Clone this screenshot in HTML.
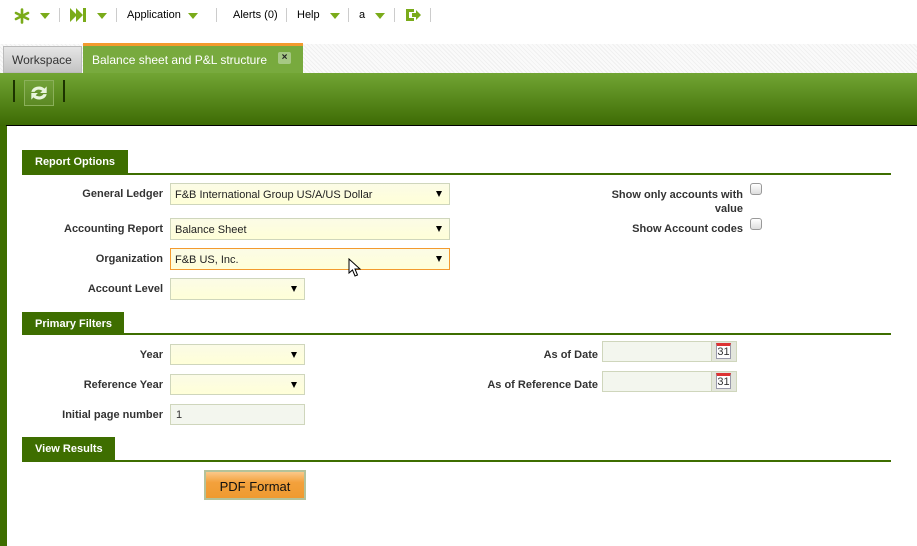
<!DOCTYPE html>
<html><head><style>
*{margin:0;padding:0;box-sizing:border-box}
body{width:917px;height:546px;overflow:hidden;background:#fff;font-family:"Liberation Sans",Arial,sans-serif;position:relative}
.a{position:absolute}
.nav{font-size:11px;color:#000;top:9px}
.tri{width:0;height:0;border-left:5px solid transparent;border-right:5px solid transparent;border-top:6px solid #7aab1a}
.sep{width:1px;height:14px;background:#ccc;top:8px}
.lbl{font-size:11px;font-weight:bold;color:#333;text-align:right}
.sel{background:linear-gradient(#fbfbe6,#ffffd8);border:1px solid #cfd6bc;font-size:11px;color:#222;padding:5px 0 0 4px}
.sel:after{content:"";position:absolute;right:7px;top:7px;border-left:3.5px solid transparent;border-right:3.5px solid transparent;border-top:6px solid #000}
.hdr{background:#3e6e00;color:#fff;font-size:11px;font-weight:bold;padding:6px 0 0 13px;height:23px}
.line{height:2px;background:#3e6e00;left:22px;width:869px}
.inp{background:#f3f6ee;border:1px solid #cfd6bc}
.cb{width:12px;height:12px;border:1px solid #999;border-radius:3px;background:linear-gradient(#fff,#ddd)}
.cal{width:25px;height:19px;background:#e3e6dc;border-left:1px solid #cfd6bc}
</style></head><body>
<svg class="a" style="left:14px;top:8px" width="16" height="16" viewBox="0 0 16 16"><g stroke="#7aab1a" stroke-width="2.6" stroke-linecap="round"><line x1="8" y1="1.5" x2="8" y2="14.5"/><line x1="2" y1="5" x2="14" y2="11"/><line x1="2" y1="11" x2="14" y2="5"/></g></svg>
<div class="a tri" style="left:40px;top:13px"></div>
<div class="a sep" style="left:59px"></div>
<svg class="a" style="left:70px;top:8px" width="17" height="14" viewBox="0 0 17 14"><path d="M0 0L7 7L0 14Z M6 0L13 7L6 14Z" fill="#7aab1a"/><rect x="13" y="0" width="3" height="14" fill="#7aab1a"/></svg>
<div class="a tri" style="left:97px;top:13px"></div>
<div class="a sep" style="left:116px"></div>
<div class="a nav" style="left:127px">Application</div>
<div class="a tri" style="left:188px;top:13px"></div>
<div class="a sep" style="left:216px"></div>
<div class="a nav" style="left:233px">Alerts (0)</div>
<div class="a sep" style="left:286px"></div>
<div class="a nav" style="left:297px">Help</div>
<div class="a tri" style="left:330px;top:13px"></div>
<div class="a sep" style="left:348px"></div>
<div class="a nav" style="left:359px">a</div>
<div class="a tri" style="left:375px;top:13px"></div>
<div class="a sep" style="left:394px"></div>
<svg class="a" style="left:405px;top:8px" width="16" height="14" viewBox="0 0 16 14"><path d="M1 1H9V4H4V10H9V13H1Z" fill="#7aab1a"/><path d="M7 5H11V2L16 7L11 12V9H7Z" fill="#7aab1a"/></svg>
<div class="a sep" style="left:430px"></div>
<div class="a" style="left:0;top:44px;width:917px;height:29px;background:repeating-linear-gradient(45deg,#f0f0f0 0 1px,#fafafa 1px 3px)"></div>
<div class="a" style="left:3px;top:46px;width:79px;height:27px;background:linear-gradient(#e6e6e6,#c4c4c4);border:1px solid #bbb;font-size:12px;color:#333;padding:6px 0 0 8px">Workspace</div>
<div class="a" style="left:83px;top:43px;width:220px;height:30px;background:#78aa3e;border-top:3px solid #f39a2e;font-size:12px;color:#fff;padding:7px 0 0 9px;white-space:nowrap">Balance sheet and P&amp;L structure</div>
<div class="a" style="left:278px;top:52px;width:13px;height:12px;background:#a6c884;border-radius:2px;font-size:10px;font-weight:bold;color:#222;text-align:center;line-height:12px">×</div>
<div class="a" style="left:0;top:73px;width:917px;height:53px;background:linear-gradient(#72a534,#3d6a03)"></div>
<div class="a" style="left:13px;top:80px;width:2px;height:22px;background:#1d3300"></div>
<div class="a" style="left:63px;top:80px;width:2px;height:22px;background:#1d3300"></div>
<div class="a" style="left:24px;top:80px;width:30px;height:26px;border:1px solid #8bb05a;background:rgba(255,255,255,.06)"></div>
<svg class="a" style="left:28px;top:82px" width="22" height="22" viewBox="0 0 20 20"><path d="M3 9A7 6 0 0 1 15 6L17 4V10H11L13 8A4.5 4 0 0 0 6 9Z" fill="#e9f5dc"/><path d="M17 11A7 6 0 0 1 5 14L3 16V10H9L7 12A4.5 4 0 0 0 14 11Z" fill="#e9f5dc"/></svg>
<div class="a" style="left:0;top:126px;width:7px;height:420px;background:#3e6e00"></div>
<div class="a" style="left:6px;top:125px;width:911px;height:1px;background:#000"></div>
<div class="a hdr" style="left:22px;top:150px;width:106px">Report Options</div>
<div class="a line" style="top:173px"></div>
<div class="a lbl" style="left:20px;top:188px;width:143px">General Ledger</div>
<div class="a sel" style="left:170px;top:183px;width:280px;height:22px">F&amp;B International Group US/A/US Dollar</div>
<div class="a lbl" style="left:20px;top:223px;width:143px">Accounting Report</div>
<div class="a sel" style="left:170px;top:218px;width:280px;height:22px">Balance Sheet</div>
<div class="a lbl" style="left:20px;top:253px;width:143px">Organization</div>
<div class="a sel" style="left:170px;top:248px;width:280px;height:22px;border-color:#f39a2e">F&amp;B US, Inc.</div>
<svg class="a" style="left:348px;top:258px" width="14" height="20" viewBox="0 0 14 20"><path d="M1 1V15L4.5 12L7 18L9.5 17L7 11H12Z" fill="#fff" stroke="#000" stroke-width="1"/></svg>
<div class="a lbl" style="left:20px;top:283px;width:143px">Account Level</div>
<div class="a sel" style="left:170px;top:278px;width:135px;height:22px"></div>
<div class="a lbl" style="left:603px;top:188px;width:140px;line-height:14px">Show only accounts with value</div>
<div class="a cb" style="left:750px;top:183px"></div>
<div class="a lbl" style="left:580px;top:223px;width:163px">Show Account codes</div>
<div class="a cb" style="left:750px;top:218px"></div>
<div class="a hdr" style="left:22px;top:312px;width:102px">Primary Filters</div>
<div class="a line" style="top:333px"></div>
<div class="a lbl" style="left:20px;top:349px;width:143px">Year</div>
<div class="a sel" style="left:170px;top:344px;width:135px;height:21px"></div>
<div class="a lbl" style="left:20px;top:379px;width:143px">Reference Year</div>
<div class="a sel" style="left:170px;top:374px;width:135px;height:21px"></div>
<div class="a lbl" style="left:20px;top:409px;width:143px">Initial page number</div>
<div class="a inp" style="left:170px;top:404px;width:135px;height:21px;font-size:11px;padding:4px 0 0 5px;color:#333">1</div>
<div class="a lbl" style="left:440px;top:349px;width:158px">As of Date</div>
<div class="a inp" style="left:602px;top:341px;width:135px;height:21px"><div class="a cal" style="right:0;top:0"></div></div>
<div class="a lbl" style="left:440px;top:379px;width:158px">As of Reference Date</div>
<div class="a inp" style="left:602px;top:371px;width:135px;height:21px"><div class="a cal" style="right:0;top:0"></div></div>
<div class="a" style="left:716px;top:343px;width:15px;height:16px;background:#fff;border:1px solid #99a;border-top:3px solid #d33;font-size:11px;line-height:12px;text-align:center;color:#333">31</div>
<div class="a" style="left:716px;top:373px;width:15px;height:16px;background:#fff;border:1px solid #99a;border-top:3px solid #d33;font-size:11px;line-height:12px;text-align:center;color:#333">31</div>
<div class="a hdr" style="left:22px;top:437px;width:93px">View Results</div>
<div class="a line" style="top:460px"></div>
<div class="a" style="left:204px;top:470px;width:102px;height:30px;border:2px solid #b4c29a;background:linear-gradient(#fbc88a,#f3a13c 40%,#ef9a30);font-size:13px;color:#111;text-align:center;padding-top:7px">PDF Format</div>
</body></html>
